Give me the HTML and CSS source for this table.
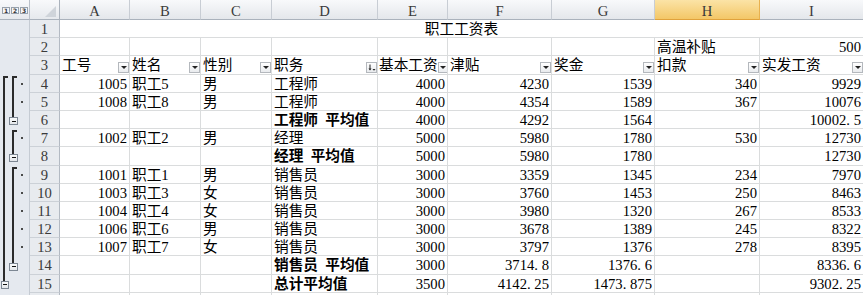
FILE: index.html
```html
<!DOCTYPE html>
<html lang="zh">
<head>
<meta charset="utf-8">
<title>职工工资表</title>
<link rel="stylesheet" href="styles.css">
</head>
<body>
<div class="app">
  <div class="outline">
    <div class="ol-head"><span class="lvl">1</span><span class="lvl">2</span><span class="lvl">3</span></div>
    <div class="ol-body"></div>
    <div class="br br1"><i class="ln"></i><b class="box"></b></div>
    <div class="br br2 g1"><i class="ln"></i><b class="box"></b></div>
    <div class="br br2 g2"><i class="ln"></i><b class="box"></b></div>
    <div class="br br2 g3"><i class="ln"></i><b class="box"></b></div>
    <i class="dot r4"></i><i class="dot r5"></i><i class="dot r7"></i><i class="dot r9"></i>
    <i class="dot r10"></i><i class="dot r11"></i><i class="dot r12"></i><i class="dot r13"></i>
  </div>
  <div class="sheet">
    <div class="corner"><i class="tri"></i></div>
    <div class="ch">A</div><div class="ch">B</div><div class="ch">C</div><div class="ch">D</div>
    <div class="ch">E</div><div class="ch">F</div><div class="ch">G</div><div class="ch sel">H</div><div class="ch">I</div>

    <div class="rh">1</div><div class="c title">职工工资表</div>

    <div class="rh">2</div><div class="c"></div><div class="c"></div><div class="c"></div><div class="c"></div>
    <div class="c"></div><div class="c"></div><div class="c"></div><div class="c">高温补贴</div><div class="c n">500</div>

    <div class="rh">3</div>
    <div class="c hd"><span>工号</span><i class="fb"></i></div>
    <div class="c hd"><span>姓名</span><i class="fb"></i></div>
    <div class="c hd"><span>性别</span><i class="fb"></i></div>
    <div class="c hd"><span>职务</span><i class="fb sort"><svg width="9" height="9" viewBox="0 0 9 9"><path d="M3 1.5v5" stroke="#222" stroke-width="1"/><path d="M1.5 5.5h3L3 7.5z" fill="#222"/><path d="M5.5 6h3L7 7.8z" fill="#222"/></svg></i></div>
    <div class="c hd tight"><span>基本工资</span><i class="fb"></i></div>
    <div class="c hd"><span>津贴</span><i class="fb"></i></div>
    <div class="c hd"><span>奖金</span><i class="fb"></i></div>
    <div class="c hd"><span>扣款</span><i class="fb"></i></div>
    <div class="c hd"><span>实发工资</span><i class="fb"></i></div>

    <div class="rh">4</div><div class="c n">1005</div><div class="c">职工5</div><div class="c">男</div><div class="c">工程师</div>
    <div class="c n">4000</div><div class="c n">4230</div><div class="c n">1539</div><div class="c n">340</div><div class="c n">9929</div>

    <div class="rh">5</div><div class="c n">1008</div><div class="c">职工8</div><div class="c">男</div><div class="c">工程师</div>
    <div class="c n">4000</div><div class="c n">4354</div><div class="c n">1589</div><div class="c n">367</div><div class="c n">10076</div>

    <div class="rh">6</div><div class="c"></div><div class="c"></div><div class="c"></div><div class="c b">工程师&ensp;平均值</div>
    <div class="c n">4000</div><div class="c n">4292</div><div class="c n">1564</div><div class="c"></div><div class="c n">10002<span class="dp">.</span>5</div>

    <div class="rh">7</div><div class="c n">1002</div><div class="c">职工2</div><div class="c">男</div><div class="c">经理</div>
    <div class="c n">5000</div><div class="c n">5980</div><div class="c n">1780</div><div class="c n">530</div><div class="c n">12730</div>

    <div class="rh">8</div><div class="c"></div><div class="c"></div><div class="c"></div><div class="c b">经理&ensp;平均值</div>
    <div class="c n">5000</div><div class="c n">5980</div><div class="c n">1780</div><div class="c"></div><div class="c n">12730</div>

    <div class="rh">9</div><div class="c n">1001</div><div class="c">职工1</div><div class="c">男</div><div class="c">销售员</div>
    <div class="c n">3000</div><div class="c n">3359</div><div class="c n">1345</div><div class="c n">234</div><div class="c n">7970</div>

    <div class="rh">10</div><div class="c n">1003</div><div class="c">职工3</div><div class="c">女</div><div class="c">销售员</div>
    <div class="c n">3000</div><div class="c n">3760</div><div class="c n">1453</div><div class="c n">250</div><div class="c n">8463</div>

    <div class="rh">11</div><div class="c n">1004</div><div class="c">职工4</div><div class="c">女</div><div class="c">销售员</div>
    <div class="c n">3000</div><div class="c n">3980</div><div class="c n">1320</div><div class="c n">267</div><div class="c n">8533</div>

    <div class="rh">12</div><div class="c n">1006</div><div class="c">职工6</div><div class="c">男</div><div class="c">销售员</div>
    <div class="c n">3000</div><div class="c n">3678</div><div class="c n">1389</div><div class="c n">245</div><div class="c n">8322</div>

    <div class="rh">13</div><div class="c n">1007</div><div class="c">职工7</div><div class="c">女</div><div class="c">销售员</div>
    <div class="c n">3000</div><div class="c n">3797</div><div class="c n">1376</div><div class="c n">278</div><div class="c n">8395</div>

    <div class="rh">14</div><div class="c"></div><div class="c"></div><div class="c"></div><div class="c b">销售员&ensp;平均值</div>
    <div class="c n">3000</div><div class="c n">3714<span class="dp">.</span>8</div><div class="c n">1376<span class="dp">.</span>6</div><div class="c"></div><div class="c n">8336<span class="dp">.</span>6</div>

    <div class="rh">15</div><div class="c"></div><div class="c"></div><div class="c"></div><div class="c b">总计平均值</div>
    <div class="c n">3500</div><div class="c n">4142<span class="dp">.</span>25</div><div class="c n">1473<span class="dp">.</span>875</div><div class="c"></div><div class="c n">9302<span class="dp">.</span>25</div>

    <div class="rh"></div><div class="c"></div><div class="c"></div><div class="c"></div><div class="c"></div>
    <div class="c"></div><div class="c"></div><div class="c"></div><div class="c"></div><div class="c"></div>
  </div>
</div>
</body>
</html>
```
FILE: styles.css
```css
html, body {
  margin: 0;
  padding: 0;
  background: #fff;
}
body {
  width: 863px;
  height: 295px;
  overflow: hidden;
}
.app {
  display: flex;
  align-items: flex-start;
  font-family: "Liberation Serif", "Noto Sans CJK SC", serif;
  font-size: 14.67px;
  line-height: 15px;
  color: #000;
}

/* ---------- outline pane ---------- */
.outline {
  display: grid;
  grid-template-columns: 30px;
  grid-template-rows: 20px repeat(16, 18.2px);
  flex: none;
}
.ol-head {
  grid-row: 1;
  grid-column: 1;
  background: linear-gradient(#f8f9fb, #e6e9ed);
  border-right: 1px solid #b9c0c9;
  border-bottom: 1px solid #aab2bc;
  box-sizing: border-box;
  display: flex;
  align-items: flex-start;
  padding: 7px 0 0 2px;
  gap: 1px;
}
.lvl {
  width: 6px;
  height: 5px;
  border: 1px solid #98a1ab;
  background: #f4f5f7;
  font: bold 6px/5px "DejaVu Sans", sans-serif;
  color: #333;
  text-align: center;
}
.ol-body {
  grid-row: 2 / 18;
  grid-column: 1;
  background: #e5e9ef;
  border-right: 1px solid #c5cbd3;
}
.br {
  grid-column: 1;
  justify-self: start;
  display: flex;
  flex-direction: column;
  padding-top: 1px;
  padding-bottom: 4px;
}
.br .ln {
  flex: 1;
  width: 3px;
  border-left: 2px solid #2b2b2b;
  border-top: 2px solid #2b2b2b;
}
.br .box {
  box-sizing: border-box;
  height: 8px;
  border: 1px solid #7d8793;
  background: linear-gradient(#fafbfc, #e3e6ea);
  display: flex;
  align-items: center;
  justify-content: center;
}
.br .box::after {
  content: "";
  width: 4px;
  height: 1px;
  background: #111;
}
.br1 { grid-row: 5 / 17; margin-left: 1px; }
.br1 .ln { margin-left: 2px; }
.br1 .box { width: 8px; }
.br2 { margin-left: 9px; }
.br2 .ln { margin-left: 3px; }
.br2 .box { width: 9px; }
.g1 { grid-row: 5 / 8; }
.g2 { grid-row: 8 / 10; }
.g3 { grid-row: 10 / 16; }

.dot {
  grid-column: 1;
  justify-self: start;
  align-self: center;
  margin-left: 21px;
  width: 2px;
  height: 2px;
  background: #4a4a4a;
}
.r4 { grid-row: 5; }
.r5 { grid-row: 6; }
.r7 { grid-row: 8; }
.r9 { grid-row: 10; }
.r10 { grid-row: 11; }
.r11 { grid-row: 12; }
.r12 { grid-row: 13; }
.r13 { grid-row: 14; }

/* ---------- sheet ---------- */
.sheet {
  display: grid;
  grid-template-columns: 30px 70px 71px 71px 106px 70px 104px 103px 105px 104px;
  grid-template-rows: 20px repeat(16, 18.2px);
  flex: none;
}
.sheet > div {
  box-sizing: border-box;
  min-width: 0;
  overflow: hidden;
  white-space: nowrap;
}
.corner {
  background: linear-gradient(#f8f9fb, #e6e9ed);
  border-right: 1px solid #aab2bc;
  border-bottom: 1px solid #aab2bc;
  display: flex;
  justify-content: flex-end;
  align-items: flex-end;
  padding: 0 3px 2px 0;
}
.tri {
  width: 11px;
  height: 11px;
  background: #cfd4da;
  clip-path: polygon(100% 0, 100% 100%, 0 100%);
}
.ch {
  background: linear-gradient(#f8f9fb, #e4e7eb);
  border-right: 1px solid #c8cdd4;
  border-bottom: 1px solid #aab2bc;
  text-align: center;
  padding-top: 4px;
  color: #3a3a3a;
}
.ch.sel {
  background: linear-gradient(#fbe3a6, #f3c767);
  border-right-color: #e9b14e;
  border-bottom-color: #e0a23c;
}
.rh {
  background: #e8ebef;
  border-right: 1px solid #b3bac3;
  border-bottom: 1px solid #ccd1d7;
  text-align: center;
  padding-top: 2px;
  color: #3a3a3a;
}
.c {
  border-right: 1px solid #dadcdd;
  border-bottom: 1px solid #dadcdd;
  padding: 2px 2px 0;
}
.title {
  grid-column: span 9;
  text-align: center;
}
.n { text-align: right; }
.b { font-weight: bold; }
.dp {
  display: inline-block;
  width: 0.5em;
  text-align: left;
}
.hd {
  display: flex;
  justify-content: space-between;
  align-items: flex-start;
  padding-right: 0;
}
.hd.tight { padding-left: 1px; }
.fb {
  flex: none;
  align-self: flex-end;
  margin-bottom: 1px;
  box-sizing: border-box;
  width: 11px;
  height: 11px;
  border: 1px solid #b4b8bd;
  background: linear-gradient(#ffffff, #e9ebee);
  display: flex;
  align-items: center;
  justify-content: center;
}
.fb::after {
  content: "";
  border-left: 3px solid transparent;
  border-right: 3px solid transparent;
  border-top: 3px solid #222;
  margin-top: 1px;
}
.fb.sort::after { content: none; }
.fb svg { display: block; }
```
